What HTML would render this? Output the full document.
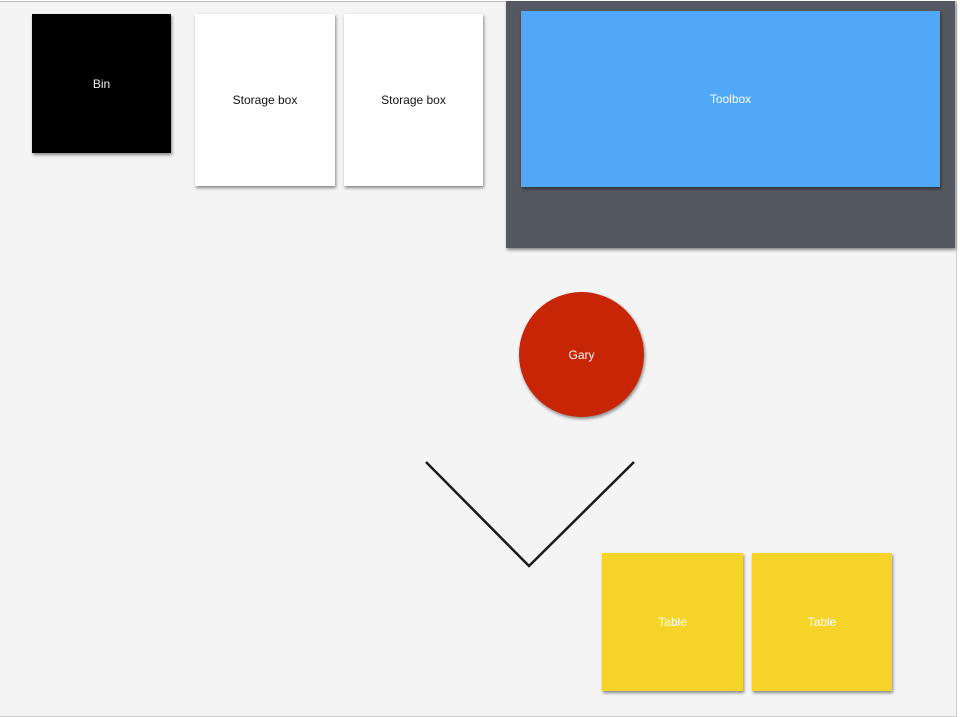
<!DOCTYPE html>
<html><head><style>
body{margin:0;width:960px;height:717px;background:#fff;position:relative;overflow:hidden;font-family:"Liberation Sans",sans-serif;font-size:12px}
.pg{position:absolute;left:0;top:1px;width:956px;height:714px;background:#f4f4f4;border-top:1px solid #bbb;border-right:1px solid #ccc;border-bottom:1px solid #ccc}
.b{position:absolute;display:flex;align-items:center;justify-content:center;box-shadow:1px 2px 3px rgba(0,0,0,.45)}
</style></head><body>
<div class="pg"></div>
<div class="b" style="left:32px;top:14px;width:139px;height:139px;background:#000;color:#eee">Bin</div>
<div class="b" style="left:195px;top:14px;width:140px;height:172px;background:#fff;color:#111">Storage box</div>
<div class="b" style="left:344px;top:14px;width:139px;height:172px;background:#fff;color:#111">Storage box</div>
<div class="b" style="left:506px;top:1px;width:449px;height:247px;background:#545860"></div>
<div class="b" style="left:521px;top:11px;width:419px;height:176px;background:#51a7f8;color:#fff">Toolbox</div>
<div class="b" style="left:519px;top:292px;width:125px;height:125px;border-radius:50%;background:#c82506;color:#fff">Gary</div>
<svg style="position:absolute;left:0;top:0" width="960" height="717"><polyline points="426,462 529,566 634,462" fill="none" stroke="#1a1a1a" stroke-width="2.5"/></svg>
<div class="b" style="left:602px;top:553px;width:141px;height:138px;background:#f5d329;color:#fff">Table</div>
<div class="b" style="left:752px;top:553px;width:140px;height:138px;background:#f5d329;color:#fff">Table</div>
</body></html>
